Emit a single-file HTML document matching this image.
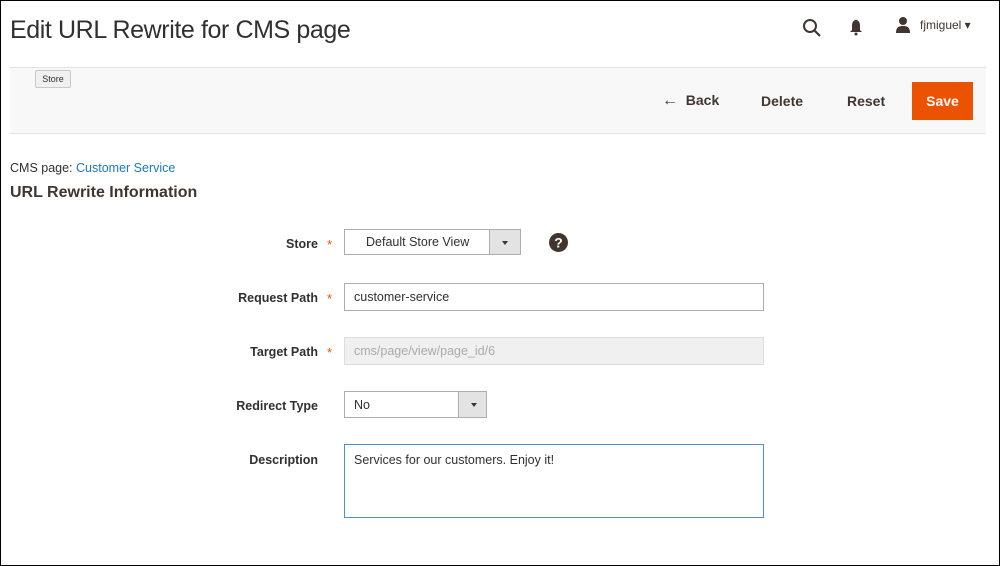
<!DOCTYPE html>
<html><head><style>
*{box-sizing:border-box;margin:0;padding:0}
body{width:1000px;height:566px;background:#fff;font-family:"Liberation Sans",sans-serif;color:#303030;position:relative;overflow:hidden}
.a{position:absolute}
.frame{left:0;top:0;width:1000px;height:566px;border:1px solid #000;pointer-events:none}
h1{position:absolute;left:10px;top:16px;font-size:25px;font-weight:normal;color:#303030;letter-spacing:-0.4px}
.bar{left:10px;top:67px;width:976px;height:67px;background:#f8f8f8;border-top:1px solid #e3e3e3;border-bottom:1px solid #e3e3e3}
.btn{font-size:14px;font-weight:bold;color:#41362f}
.lbl{font-size:12.5px;font-weight:bold;color:#303030;text-align:right;width:130px;left:188px}
.star{color:#eb5202;font-size:13px;left:327px}
.inp{border:1px solid #adadad;background:#fff;font-size:12.5px;padding-left:9px;display:flex;align-items:center}
.arr{position:absolute;right:0;top:0;bottom:0;width:31px;background:#e3e3e3;border-left:1px solid #adadad}
.arr:after{content:"";position:absolute;left:12px;top:11px;border:3.5px solid transparent;border-top:4px solid #41362f}
</style></head><body>
<h1>Edit URL Rewrite for CMS page</h1>
<svg class="a" style="left:802px;top:18px" width="20" height="20" viewBox="0 0 20 20"><circle cx="8" cy="8" r="6" fill="none" stroke="#41362f" stroke-width="2"/><line x1="12.5" y1="12.5" x2="18" y2="18" stroke="#41362f" stroke-width="2.2"/></svg>
<svg class="a" style="left:849px;top:19px" width="14" height="17" viewBox="0 0 14 17"><path d="M7 1C4 1 3 4 3 7V11L1 13H13L11 11V7C11 4 10 1 7 1Z" fill="#41362f"/><circle cx="7" cy="15" r="1.5" fill="#41362f"/></svg>
<svg class="a" style="left:895px;top:16px" width="16" height="18" viewBox="0 0 16 18"><circle cx="8" cy="5" r="4" fill="#41362f"/><path d="M1 17C1 11 4 10 8 10S15 11 15 17Z" fill="#41362f"/></svg>
<div class="a" style="left:920px;top:18px;font-size:12px;color:#41362f">fjmiguel ▾</div>
<div class="a bar"></div>
<div class="a" style="left:35px;top:70px;width:36px;height:18px;border:1px solid #c8c8c8;background:#f0f0f0;font-size:9px;text-align:center;line-height:16px;border-radius:2px">Store</div>
<div class="a btn" style="left:662px;top:92px"><b style="font-size:16px">←</b>&nbsp; Back</div>
<div class="a btn" style="left:761px;top:93px">Delete</div>
<div class="a btn" style="left:847px;top:93px">Reset</div>
<div class="a btn" style="left:912px;top:82px;width:61px;height:38px;background:#eb5202;color:#fff;text-align:center;line-height:38px">Save</div>
<div class="a" style="left:10px;top:161px;font-size:12.5px">CMS page: <span style="color:#1979c3">Customer Service</span></div>
<div class="a" style="left:10px;top:184px;font-size:16px;font-weight:bold;color:#41362f">URL Rewrite Information</div>

<div class="a lbl" style="top:237px">Store</div><div class="a star" style="top:237px">*</div>
<div class="a inp" style="left:344px;top:229px;width:177px;height:26px;padding-left:21px">Default Store View<div class="arr"></div></div>
<svg class="a" style="left:549px;top:233px" width="19" height="19" viewBox="0 0 19 19"><circle cx="9.5" cy="9.5" r="9.5" fill="#41362f"/><text x="9.5" y="14.5" text-anchor="middle" font-family="Liberation Sans" font-weight="bold" font-size="14" fill="#fff">?</text></svg>

<div class="a lbl" style="top:291px">Request Path</div><div class="a star" style="top:291px">*</div>
<div class="a inp" style="left:344px;top:283px;width:420px;height:28px">customer-service</div>

<div class="a lbl" style="top:345px">Target Path</div><div class="a star" style="top:345px">*</div>
<div class="a inp" style="left:344px;top:337px;width:420px;height:28px;background:#f0f0f0;border-color:#ddd;color:#aaa">cms/page/view/page_id/6</div>

<div class="a lbl" style="top:399px">Redirect Type</div>
<div class="a inp" style="left:344px;top:391px;width:143px;height:27px">No<div class="arr" style="width:28px"></div></div>

<div class="a lbl" style="top:453px">Description</div>
<div class="a inp" style="left:344px;top:444px;width:420px;height:74px;border-color:#4a90d0;align-items:flex-start;padding-top:8px">Services for our customers. Enjoy it!</div>
<div class="a frame"></div>
</body></html>
